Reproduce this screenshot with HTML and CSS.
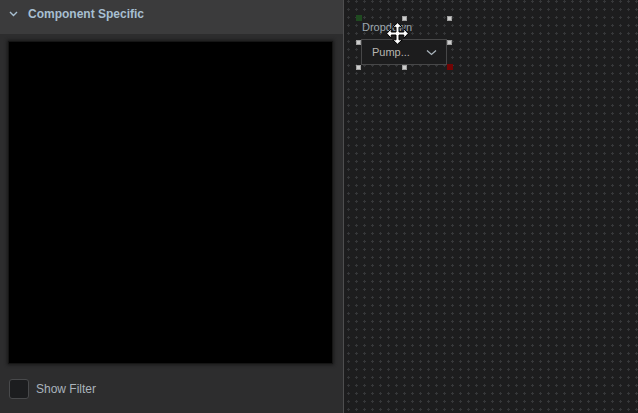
FILE: index.html
```
<!DOCTYPE html>
<html>
<head>
<meta charset="utf-8">
<link rel="stylesheet" href="styles.css">
</head>
<body>
<div class="app">
  <aside class="panel">
    <div class="panel-header">
      <svg class="chev" width="9" height="6" viewBox="0 0 9 6"><path d="M1 1 L4.5 4.5 L8 1" fill="none" stroke="#a7bfd1" stroke-width="1.4"/></svg>
      <span class="title">Component Specific</span>
    </div>
    <div class="panel-body">
      <div class="preview"></div>
      <label class="check-row">
        <span class="checkbox"></span>
        <span class="check-label">Show Filter</span>
      </label>
    </div>
  </aside>
  <div class="divider"></div>
  <main class="canvas">
    <svg class="grid" width="100%" height="100%">
      <defs>
        <pattern id="plus" x="3" y="0" width="8" height="8" patternUnits="userSpaceOnUse">
          <rect x="0" y="1" width="3" height="1" fill="#363739"/>
          <rect x="1" y="0" width="1" height="3" fill="#363739"/>
        </pattern>
      </defs>
      <rect width="100%" height="100%" fill="url(#plus)"/>
    </svg>
    <div class="node">
      <div class="node-label">Dropdown</div>
      <div class="dropdown">
        <span class="dd-text">Pump...</span>
        <svg class="dd-chev" width="11" height="7" viewBox="0 0 11 7"><path d="M1 1.5 L5.5 5.5 L10 1.5" fill="none" stroke="#a9b3bb" stroke-width="1.3"/></svg>
      </div>
    </div>
    <span class="port port-in"></span>
    <span class="handle h-tm"></span>
    <span class="handle h-tr"></span>
    <span class="handle h-ml"></span>
    <span class="handle h-mr"></span>
    <span class="handle h-bl"></span>
    <span class="handle h-bm"></span>
    <span class="port port-out"></span>
    <svg class="cursor" width="23" height="23" viewBox="0 0 23 23">
      <path d="M11.5 0.8 L16.3 5.2 L13 5.2 L13 10 L17.8 10 L17.8 6.7 L22.2 11.5 L17.8 16.3 L17.8 13 L13 13 L13 17.8 L16.3 17.8 L11.5 22.2 L6.7 17.8 L10 17.8 L10 13 L5.2 13 L5.2 16.3 L0.8 11.5 L5.2 6.7 L5.2 10 L10 10 L10 5.2 L6.7 5.2 Z" fill="#ffffff" stroke="#000000" stroke-width="1" stroke-linejoin="miter"/>
    </svg>
  </main>
</div>
</body>
</html>
```
FILE: styles.css
```
* { box-sizing: border-box; }
html, body {
  margin: 0;
  padding: 0;
  width: 638px;
  height: 413px;
  overflow: hidden;
  background: #1d1d1e;
  font-family: "Liberation Sans", Arial, sans-serif;
}
.app {
  display: flex;
  width: 638px;
  height: 413px;
}
.panel {
  width: 343px;
  display: flex;
  flex-direction: column;
  background: #2d2d2e;
}
.panel-header {
  height: 34px;
  background: #3b3b3c;
  display: flex;
  align-items: center;
  padding: 0 0 6px 9px;
  gap: 10px;
}
.chev { display: block; }
.title {
  color: #a7bfd1;
  font-weight: bold;
  font-size: 12px;
  line-height: 14px;
}
.panel-body {
  flex: 1;
  display: flex;
  flex-direction: column;
  padding: 7px 0 0 8px;
}
.preview {
  width: 325px;
  height: 323px;
  background: #000;
  border: 1px solid #151515;
  box-shadow: 0 0 3px 1px #1a1a1a;
}
.check-row {
  display: flex;
  align-items: center;
  gap: 7px;
  margin-top: 15px;
  padding-left: 1px;
}
.checkbox {
  width: 20px;
  height: 20px;
  border-radius: 3px;
  background: #1c1d1f;
  border: 1px solid #48494b;
}
.check-label {
  color: #aab3bb;
  font-size: 12px;
}
.divider {
  width: 1px;
  background: #4e4e4f;
}
.canvas {
  flex: 1;
  position: relative;
  background: #1d1d1e;
  overflow: hidden;
}
.grid {
  position: absolute;
  left: 0;
  top: 0;
}
.node {
  position: absolute;
  left: 17px;
  top: 20px;
}
.node-label {
  color: #9ea8b0;
  font-size: 11px;
  height: 19px;
  padding-left: 1px;
  line-height: 14px;
}
.dropdown {
  width: 86px;
  height: 26px;
  border: 1px solid #474748;
  background: #1c1c1d;
  display: flex;
  align-items: center;
  justify-content: space-between;
  padding: 0 9px 0 10px;
}
.dd-text {
  color: #b8b6b0;
  font-size: 11px;
}
.dd-chev { display: block; }
.handle {
  position: absolute;
  width: 5px;
  height: 5px;
  background: #cdcdcd;
  border: 1px solid #a0a0a0;
}
.h-tm { left: 58px; top: 16px; }
.h-tr { left: 103px; top: 16px; }
.h-ml { left: 12px; top: 40px; }
.h-mr { left: 103px; top: 40px; }
.h-bl { left: 12px; top: 65px; }
.h-bm { left: 58px; top: 65px; }
.port {
  position: absolute;
  width: 6px;
  height: 6px;
}
.port-in { left: 12px; top: 15px; background: #1f4a20; }
.port-out { left: 103px; top: 64px; background: #720404; }
.cursor {
  position: absolute;
  left: 42px;
  top: 22px;
}
```
